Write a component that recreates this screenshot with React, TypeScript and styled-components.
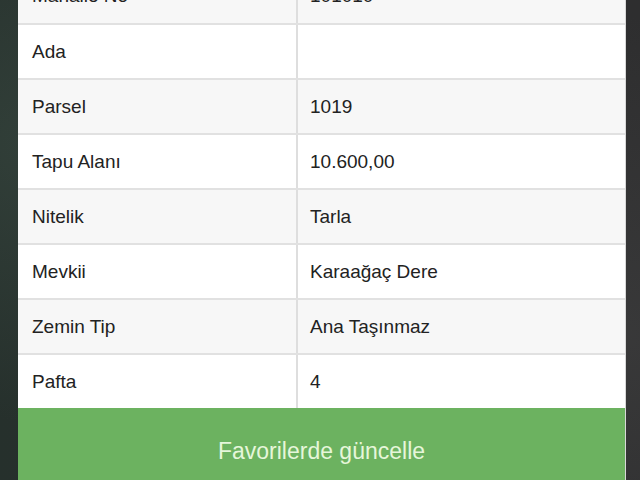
import React from 'react';
import styled, { createGlobalStyle } from 'styled-components';

const GlobalStyle = createGlobalStyle`
  html, body {
    margin: 0;
    padding: 0;
    height: 100%;
    overflow: hidden;
  }
  body {
    font-family: 'Liberation Sans', Arial, sans-serif;
    background: #2b2e2d;
  }
`;

const Backdrop = styled.div`
  width: 640px;
  height: 480px;
  overflow: hidden;
  display: flex;
  align-items: flex-start;
  padding-left: 18px;
  box-sizing: border-box;
  background:
    radial-gradient(circle at 5% 30%, rgba(70, 90, 80, 0.35), transparent 40%),
    radial-gradient(circle at 98% 70%, rgba(80, 80, 80, 0.3), transparent 45%),
    linear-gradient(90deg, #26302c 0%, #2c302f 50%, #2e2e2f 100%);
`;

const Sheet = styled.div`
  width: 607px;
  flex-shrink: 0;
  margin-top: -32px;
  display: flex;
  flex-direction: column;
  background: #ffffff;
  box-shadow: 1px 0 0 #d8d8d8;
`;

const Row = styled.div<{ $shaded: boolean }>`
  display: grid;
  grid-template-columns: 278px 1fr;
  flex-shrink: 0;
  height: 55px;
  box-sizing: border-box;
  border-top: 2px solid #e1e1e1;
  background: ${({ $shaded }) => ($shaded ? '#f7f7f7' : '#ffffff')};

  &:first-child {
    border-top: none;
  }
`;

const Cell = styled.div<{ $divider?: boolean }>`
  display: flex;
  align-items: center;
  padding-left: ${({ $divider }) => ($divider ? '12px' : '14px')};
  border-left: ${({ $divider }) => ($divider ? '2px solid #dedede' : 'none')};
  font-size: 19px;
  color: #222222;
  white-space: nowrap;
`;

const UpdateButton = styled.button`
  display: flex;
  align-items: center;
  justify-content: center;
  flex-shrink: 0;
  width: 100%;
  height: 84px;
  margin: 0;
  padding: 2px 0 0;
  border: none;
  background: #6cb260;
  color: #e6f6da;
  font-family: 'Liberation Sans', Arial, sans-serif;
  font-size: 23px;
  cursor: pointer;
`;

const rows: [string, string][] = [
  ['Mahalle No', '101010'],
  ['Ada', ''],
  ['Parsel', '1019'],
  ['Tapu Alanı', '10.600,00'],
  ['Nitelik', 'Tarla'],
  ['Mevkii', 'Karaağaç Dere'],
  ['Zemin Tip', 'Ana Taşınmaz'],
  ['Pafta', '4'],
];

export default function App() {
  return (
    <>
      <GlobalStyle />
      <Backdrop>
        <Sheet>
          {rows.map(([label, value], i) => (
            <Row key={label} $shaded={i % 2 === 0}>
              <Cell>{label}</Cell>
              <Cell $divider>{value}</Cell>
            </Row>
          ))}
          <UpdateButton>Favorilerde güncelle</UpdateButton>
        </Sheet>
      </Backdrop>
    </>
  );
}
